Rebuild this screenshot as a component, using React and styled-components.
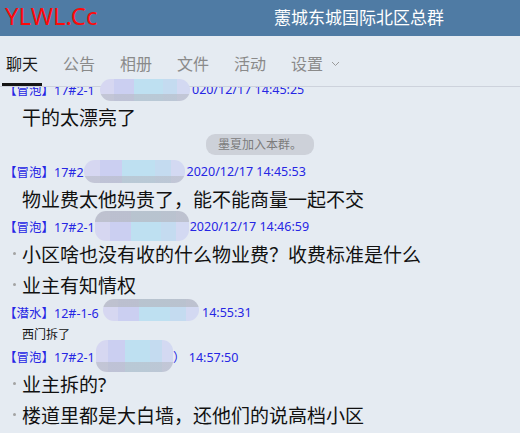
import React from "react";
import styled, { createGlobalStyle } from "styled-components";

const GlobalStyle = createGlobalStyle`
  html, body {
    margin: 0;
    padding: 0;
    background: #e5ebf2;
  }
  body {
    font-family: "Noto Sans", "Noto Sans CJK SC", sans-serif;
  }
`;

const tabs = ["聊天", "公告", "相册", "文件", "活动", "设置"];

const messages = [
  {
    tag: "【冒泡】",
    who: "17#2-1",
    pre: 96,
    blob: { w: 90, h: 22, dy: 1, band: "bottom" },
    gap: 2,
    time: "020/12/17 14:45:25",
    lines: [{ text: "干的太漂亮了" }],
  },
  "notice",
  {
    tag: "【冒泡】",
    who: "17#2",
    pre: 78,
    blob: { w: 101, h: 23, dy: 0, band: "bottom" },
    gap: 2,
    time: "2020/12/17 14:45:53",
    lines: [{ text: "物业费太他妈贵了，能不能商量一起不交" }],
  },
  {
    tag: "【冒泡】",
    who: "17#2-1",
    pre: 89,
    blob: { w: 94, h: 30, dy: 0, band: "top" },
    gap: 1,
    time: "2020/12/17 14:46:59",
    lines: [
      { text: "小区啥也没有收的什么物业费？收费标准是什么", dot: true },
      { text: "业主有知情权", dot: true },
    ],
  },
  {
    tag: "【潜水】",
    who: "12#-1-6",
    pre: 99,
    blob: { w: 96, h: 22, dy: -2, band: "top" },
    gap: 3,
    time: "14:55:31",
    lines: [{ text: "西门拆了", small: true }],
  },
  {
    tag: "【冒泡】",
    who: "17#2-1",
    pre: 92,
    blob: { w: 77, h: 32, dy: 0, band: "bottom" },
    gap: 0,
    time: "）\u00a014:57:50",
    lines: [
      { text: "业主拆的?", dot: true },
      { text: "楼道里都是大白墙，还他们的说高档小区", dot: true },
    ],
  },
];

const Chevron = () => (
  <svg width="9" height="6" viewBox="0 0 9 6" fill="none">
    <path d="M1 1l3.5 3.5L8 1" stroke="#9a9a9a" strokeWidth="1" />
  </svg>
);

const App = () => {
  return (
    <Page>
      <GlobalStyle />
      <Header>
        <Logo>YLWL.Cc</Logo>
        <Title>藼城东城国际北区总群</Title>
      </Header>
      <TabBar>
        {tabs.map((t, i) => (
          <Tab key={t} $active={i === 0}>
            {t}
            {t === "设置" && (
              <Caret>
                <Chevron />
              </Caret>
            )}
          </Tab>
        ))}
      </TabBar>
      <Chat>
        {messages.map((m, i) =>
          m === "notice" ? (
            <Notice key={i}>
              <Pill>墨夏加入本群。</Pill>
            </Notice>
          ) : (
            <Message key={i}>
              <Meta>
                <Who $w={m.pre}>
                  {m.tag}
                  {m.who}
                </Who>
                <Blob $w={m.blob.w} $h={m.blob.h} $dy={m.blob.dy} $band={m.blob.band} />
                <Time $gap={m.gap}>{m.time}</Time>
              </Meta>
              <Lines>
                {m.lines.map((l, j) => (
                  <Line key={j} $small={l.small}>
                    <Dot $show={l.dot} />
                    {l.text}
                  </Line>
                ))}
              </Lines>
            </Message>
          )
        )}
      </Chat>
    </Page>
  );
};

const Page = styled.div`
  width: 520px;
  height: 433px;
  overflow: hidden;
  display: flex;
  flex-direction: column;
  background: #e5ebf2;
`;

const Header = styled.div`
  height: 36px;
  flex-shrink: 0;
  background: #4f7ba4;
  display: flex;
  align-items: center;
  padding: 0 5px;
  position: relative;
  z-index: 2;
`;

const Logo = styled.div`
  width: 269px;
  flex-shrink: 0;
  color: #ff0a0a;
  font-size: 24px;
  line-height: 1;
  margin-top: -5px;
`;

const Title = styled.div`
  color: #ffffff;
  font-size: 17px;
  font-family: "Noto Sans CJK SC", sans-serif;
  margin-top: -3px;
`;

const TabBar = styled.div`
  height: 50px;
  flex-shrink: 0;
  display: flex;
  gap: 17px;
  padding-left: 2px;
  background: #e5ebf2;
  border-bottom: 1px solid #cdd2dc;
  position: relative;
  z-index: 2;
`;

const Tab = styled.div`
  display: flex;
  align-items: center;
  padding: 4px 4px 0;
  font-size: 16px;
  font-family: "Noto Sans CJK SC", sans-serif;
  color: ${(p) => (p.$active ? "#1a1a1a" : "#8a8a8a")};
  box-shadow: ${(p) => (p.$active ? "inset 0 -3px 0 #151515" : "none")};
`;

const Caret = styled.span`
  display: flex;
  margin-left: 8px;
  margin-top: 2px;
`;

const Chat = styled.div`
  flex: 1;
  margin-top: -7px;
`;

const Message = styled.div`
  margin-bottom: 3px;
`;

const Meta = styled.div`
  height: 18px;
  display: flex;
  align-items: center;
  padding-left: 4px;
  font-size: 12.5px;
  color: #2626e4;
  white-space: nowrap;
`;

const Who = styled.span`
  min-width: ${(p) => p.$w}px;
  flex-shrink: 0;
`;

const Blob = styled.span`
  flex-shrink: 0;
  width: ${(p) => p.$w}px;
  height: ${(p) => p.$h}px;
  border-radius: 11px;
  position: relative;
  top: ${(p) => p.$dy}px;
  z-index: 3;
  background: ${(p) =>
      p.$band === "top"
        ? "linear-gradient(to bottom, rgba(182,186,196,0.75) 0 38%, transparent 38%)"
        : "linear-gradient(to top, rgba(182,186,196,0.6) 0 30%, transparent 30%)"},
    linear-gradient(
      to right,
      #d6d7f1 0 16%,
      #cbcff1 16% 38%,
      #bee0f1 38% 70%,
      #c4dbf0 70% 86%,
      #d3d9f2 86% 100%
    );
`;

const Time = styled.span`
  margin-left: ${(p) => p.$gap}px;
`;

const Lines = styled.div`
  padding-top: 3px;
`;

const Line = styled.div`
  height: ${(p) => (p.$small ? 20 : 31)}px;
  display: flex;
  align-items: center;
  padding-left: 13px;
  font-size: ${(p) => (p.$small ? 12 : 19)}px;
  color: #111111;
  white-space: nowrap;
`;

const Dot = styled.span`
  width: 3px;
  height: 3px;
  border-radius: 50%;
  margin-right: 6px;
  background: ${(p) => (p.$show ? "#a3a3a3" : "transparent")};
`;

const Notice = styled.div`
  display: flex;
  justify-content: center;
  margin: -1px 0 7px;
`;

const Pill = styled.div`
  height: 21px;
  line-height: 21px;
  padding: 0 12px;
  border-radius: 9px;
  background: #cdd1d9;
  color: #7c7c7c;
  font-size: 12px;
`;

export default App;
